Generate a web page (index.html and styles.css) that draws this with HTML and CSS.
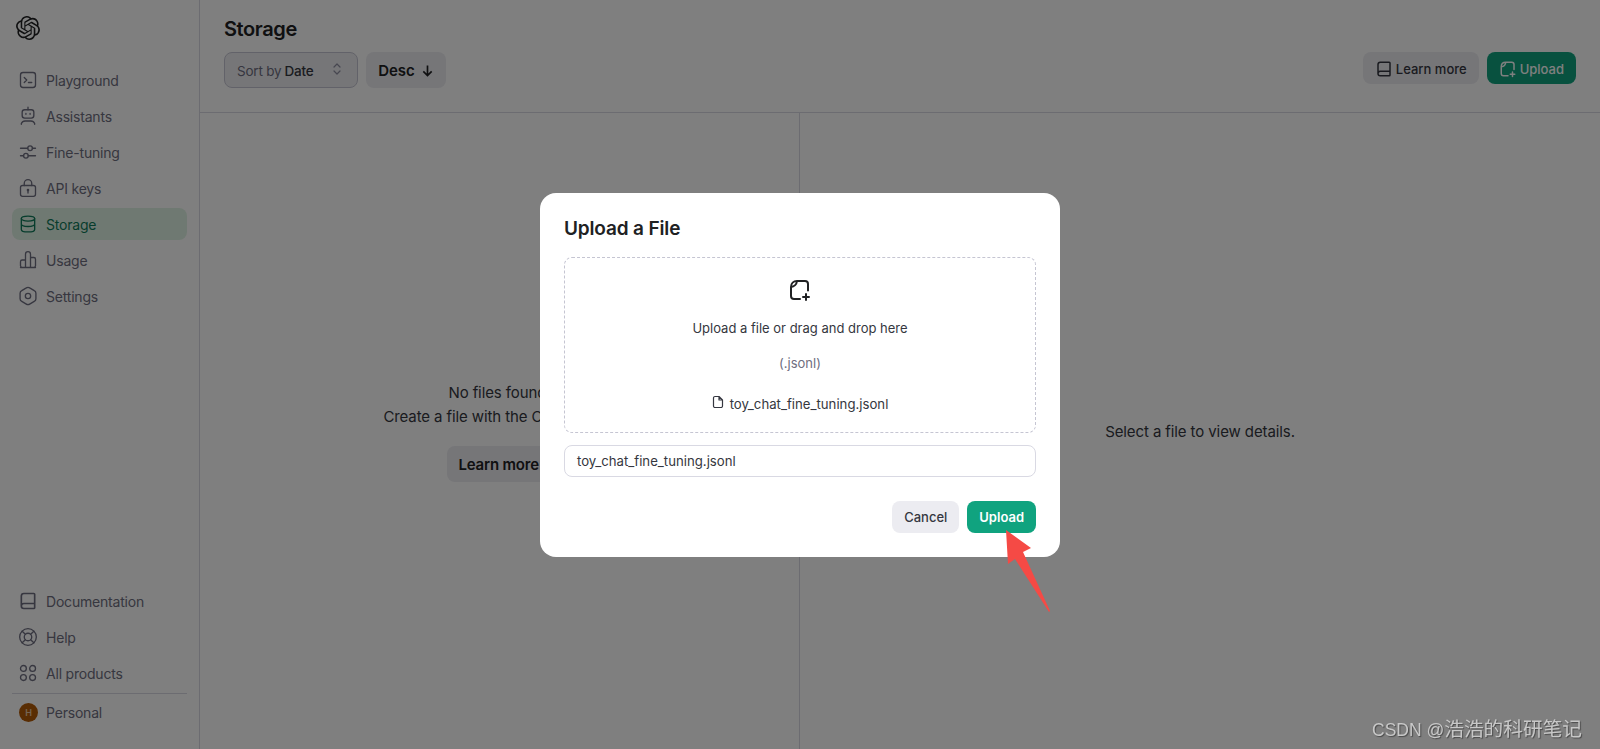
FILE: index.html
```html
<!DOCTYPE html>
<html lang="en">
<head>
<meta charset="utf-8">
<title>Storage</title>
<link rel="stylesheet" href="styles.css">
</head>
<body>
<svg class="defs" width="0" height="0" aria-hidden="true">
  <symbol id="i-book" viewBox="0 0 24 24"><path d="M7 3h12a1 1 0 0 1 1 1v16a1 1 0 0 1-1 1H7a3 3 0 0 1-3-3V6a3 3 0 0 1 3-3Z M4 18a3 3 0 0 1 3-3h13" fill="none" stroke="currentColor" stroke-width="2" stroke-linejoin="round"/></symbol>
  <symbol id="i-add" viewBox="0 0 24 24"><path d="M9 3h8a3 3 0 0 1 3 3v6.500 M12 21H6a3 3 0 0 1-3-3V9 M3 9c0-3.500 2.500-6 6-6-.3 3.200-2.800 5.700-6 6Z M18 16v6 M15 19h6" fill="none" stroke="currentColor" stroke-width="2" stroke-linecap="round" stroke-linejoin="round"/></symbol>
</svg>
<div class="app">
  <aside class="sidebar">
    <svg class="logo" viewBox="0 0 24 24" width="24" height="24"><path fill="currentColor" d="M22.2819 9.8211a5.9847 5.9847 0 0 0-.5157-4.9108 6.0462 6.0462 0 0 0-6.5098-2.9A6.0651 6.0651 0 0 0 4.9807 4.1818a5.9847 5.9847 0 0 0-3.9977 2.9 6.0462 6.0462 0 0 0 .7427 7.0966 5.98 5.98 0 0 0 .511 4.9107 6.051 6.051 0 0 0 6.5146 2.9001A5.9847 5.9847 0 0 0 13.2599 24a6.0557 6.0557 0 0 0 5.7718-4.2058 5.9894 5.9894 0 0 0 3.9977-2.9001 6.0557 6.0557 0 0 0-.7475-7.0729zm-9.022 12.6081a4.4755 4.4755 0 0 1-2.8764-1.0408l.1419-.0804 4.7783-2.7582a.7948.7948 0 0 0 .3927-.6813v-6.7369l2.02 1.1686a.071.071 0 0 1 .038.052v5.5826a4.504 4.504 0 0 1-4.4945 4.4944zm-9.6607-4.1254a4.4708 4.4708 0 0 1-.5346-3.0137l.142.0852 4.783 2.7582a.7712.7712 0 0 0 .7806 0l5.8428-3.3685v2.3324a.0804.0804 0 0 1-.0332.0615L9.74 19.9502a4.4992 4.4992 0 0 1-6.1408-1.6464zM2.3408 7.8956a4.485 4.485 0 0 1 2.3655-1.9728V11.6a.7664.7664 0 0 0 .3879.6765l5.8144 3.3543-2.0201 1.1685a.0757.0757 0 0 1-.071 0l-4.8303-2.7865A4.504 4.504 0 0 1 2.3408 7.872zm16.5963 3.8558L13.1038 8.364 15.1192 7.2a.0757.0757 0 0 1 .071 0l4.8303 2.7913a4.4944 4.4944 0 0 1-.6765 8.1042v-5.6772a.79.79 0 0 0-.407-.667zm2.0107-3.0231l-.142-.0852-4.7735-2.7818a.7759.7759 0 0 0-.7854 0L9.409 9.2297V6.8974a.0662.0662 0 0 1 .0284-.0615l4.8303-2.7866a4.4992 4.4992 0 0 1 6.6802 4.66zM8.3065 12.863l-2.02-1.1638a.0804.0804 0 0 1-.038-.0567V6.0742a4.4992 4.4992 0 0 1 7.3757-3.4537l-.142.0805L8.704 5.459a.7948.7948 0 0 0-.3927.6813zm1.0976-2.3654l2.602-1.4998 2.6069 1.4998v2.9994l-2.5974 1.4997-2.6067-1.4997Z"/></svg>
    <nav class="nav nav-main">
      <a class="nav-item"><svg class="nav-icon" viewBox="0 0 24 24"><rect x="3" y="3" width="18" height="18" rx="3"/><path d="m7.500 9 3 3-3 3M12.500 15h4"/></svg>Playground</a>
      <a class="nav-item"><svg class="nav-icon" viewBox="0 0 24 24"><rect x="5" y="4.500" width="14" height="10" rx="3"/><path d="M12 1.500v3M9.500 9v1M14.500 9v1M4 22v-1a5 5 0 0 1 5-3h6a5 5 0 0 1 5 3v1"/></svg>Assistants</a>
      <a class="nav-item"><svg class="nav-icon" viewBox="0 0 24 24"><circle cx="14.500" cy="7.500" r="2.800"/><circle cx="9.500" cy="16.500" r="2.800"/><path d="M3 7.500h8.700M17.300 7.500H21M3 16.500h3.700M12.300 16.500H21"/></svg>Fine-tuning</a>
      <a class="nav-item"><svg class="nav-icon" viewBox="0 0 24 24"><rect x="3" y="9" width="18" height="13" rx="2.500"/><path d="M7.500 9V6.500a4.500 4.500 0 0 1 9 0V9M12 15v3"/><circle cx="12" cy="14.500" r=".8"/></svg>API keys</a>
      <a class="nav-item is-active"><svg class="nav-icon" viewBox="0 0 24 24"><ellipse cx="12" cy="5.500" rx="8" ry="3"/><path d="M4 5.500v13c0 1.700 3.600 3 8 3s8-1.300 8-3v-13M4 12c0 1.700 3.600 3 8 3s8-1.300 8-3"/></svg>Storage</a>
      <a class="nav-item"><svg class="nav-icon" viewBox="0 0 24 24"><path d="M9 21V5a3 3 0 0 1 6 0v16M9 21H5a2 2 0 0 1-2-2v-5a2 2 0 0 1 2-2h4M15 21h4a2 2 0 0 0 2-2v-8a2 2 0 0 0-2-2h-4M3 21h18"/></svg>Usage</a>
      <a class="nav-item"><svg class="nav-icon" viewBox="0 0 24 24"><path d="M10 2.300a3.500 3.500 0 0 1 4 0l5.500 3.200a3.500 3.500 0 0 1 2 3.400v6.200a3.500 3.500 0 0 1-2 3.400L14 21.700a3.500 3.500 0 0 1-4 0l-5.500-3.200a3.500 3.500 0 0 1-2-3.400V8.900a3.500 3.500 0 0 1 2-3.400Z"/><circle cx="12" cy="12" r="3.200"/></svg>Settings</a>
    </nav>
    <nav class="nav nav-bottom">
      <a class="nav-item"><svg class="nav-icon"><use href="#i-book"/></svg>Documentation</a>
      <a class="nav-item"><svg class="nav-icon" viewBox="0 0 24 24"><circle cx="12" cy="12" r="10"/><circle cx="12" cy="12" r="4.500"/><path d="m5 5 3.800 3.800M19 5l-3.800 3.800M5 19l3.800-3.800M19 19l-3.800-3.800"/></svg>Help</a>
      <a class="nav-item"><svg class="nav-icon" viewBox="0 0 24 24"><circle cx="6.500" cy="6.500" r="3.500"/><circle cx="17.500" cy="6.500" r="3.500"/><circle cx="6.500" cy="17.500" r="3.500"/><circle cx="17.500" cy="17.500" r="3.500"/></svg>All products</a>
      <div class="nav-sep"></div>
      <a class="nav-item nav-org"><span class="avatar">H</span>Personal</a>
    </nav>
  </aside>
  <main class="main">
    <header class="header">
      <div class="header-left">
        <h1 class="page-title">Storage</h1>
        <div class="controls">
          <div class="select"><span class="select-label">Sort by</span><span class="select-value">Date</span>
            <svg class="chevrons" viewBox="0 0 8 12"><path d="M1 4 4 1l3 3M1 8l3 3 3-3"/></svg></div>
          <button class="btn btn-tall btn-desc">Desc <svg class="arrow-down" viewBox="0 0 14 14"><path d="M7 1.500v11M2.500 8 7 12.500 11.500 8"/></svg></button>
        </div>
      </div>
      <div class="header-right">
        <button class="btn btn-small"><svg class="btn-icon"><use href="#i-book"/></svg>Learn more</button>
        <button class="btn btn-small btn-green"><svg class="btn-icon"><use href="#i-add"/></svg>Upload</button>
      </div>
    </header>
    <section class="panels">
      <div class="panel panel-left">
        <p class="empty-text">No files found.<br>Create a file with the OpenAI API.</p>
        <button class="btn btn-tall btn-learn">Learn more</button>
      </div>
      <div class="panel"><p class="empty-text empty-detail">Select a file to view details.</p></div>
    </section>
  </main>
</div>
<div class="overlay">
  <div class="modal">
    <h2 class="modal-title">Upload a File</h2>
    <div class="dropzone">
      <svg class="drop-icon"><use href="#i-add"/></svg>
      <div class="drop-text">Upload a file or drag and drop here</div>
      <div class="drop-ext">(.jsonl)</div>
      <div class="drop-file"><svg class="file-icon" viewBox="0 0 12 14"><path d="M3 1.500h4L10.500 5v6A1.500 1.500 0 0 1 9 12.500H3A1.500 1.500 0 0 1 1.500 11V3A1.500 1.500 0 0 1 3 1.500ZM7 1.500 7 5h3.500"/></svg>toy_chat_fine_tuning.jsonl</div>
    </div>
    <div class="name-input">toy_chat_fine_tuning.jsonl</div>
    <div class="modal-actions">
      <button class="btn btn-small btn-cancel">Cancel</button>
      <button class="btn btn-small btn-green">Upload</button>
    </div>
  </div>
</div>
<svg class="red-arrow" viewBox="0 0 60 100" width="60" height="100"><polygon points="4,3 29,21 21,25 48,84 47,85 13,32 6,37"/></svg>
<div class="watermark"><span class="wm-latin">CSDN @</span>浩浩的科研笔记</div>
</body>
</html>
```
FILE: styles.css
```css
* { box-sizing: border-box; }
html, body { margin: 0; height: 100%; overflow: hidden; }
body {
  font-family: Inter, "Noto Sans", "Liberation Sans", sans-serif;
  font-size: 14px;
  color: #202123;
  background: #fff;
  position: relative;
}
.defs { position: absolute; }
.app { display: flex; height: 749px; }

.sidebar {
  width: 200px;
  flex: none;
  border-right: 1px solid #d9d9e3;
  padding: 16px 12px 21px;
  display: flex;
  flex-direction: column;
}
.logo { color: #202123; margin-left: 4px; display: block; flex: none; }
.nav { display: flex; flex-direction: column; gap: 4px; }
.nav-main { margin-top: 24px; }
.nav-bottom { margin-top: auto; }
.nav-item {
  display: flex;
  align-items: center;
  gap: 8px;
  height: 32px;
  padding: 0 6px;
  border-radius: 8px;
  color: #6e6e80;
  font-size: 14px;
  letter-spacing: -.2px;
}
.nav-item.is-active { background: #dff3e4; color: #0f7a5a; }
.nav-icon {
  width: 20px; height: 20px; flex: none;
  fill: none; stroke: currentColor; stroke-width: 1.600;
  stroke-linecap: round; stroke-linejoin: round;
}
.nav-sep { height: 1px; background: #d9d9e3; margin-bottom: -2px; }
.nav-org { gap: 8px; padding-left: 7px; }
.avatar {
  width: 19px; height: 19px; border-radius: 50%;
  background: #b35a06; color: #e8c9a8;
  font-size: 9px; font-weight: 600;
  display: flex; align-items: center; justify-content: center;
  flex: none;
}

.main { flex: 1; min-width: 0; display: flex; flex-direction: column; }
.header {
  height: 113px;
  flex: none;
  border-bottom: 1px solid #d9d9e3;
  padding: 16px 24px 0;
  display: flex;
  justify-content: space-between;
}
.page-title { margin: 0; font-size: 20px; font-weight: 600; line-height: 26px; color: #202123; letter-spacing: -.4px; }
.controls { display: flex; gap: 8px; margin-top: 10px; }
.select {
  width: 134px; height: 36px;
  display: flex; align-items: center;
  padding: 1px 12px 0;
  border: 1px solid #c5c5d2;
  border-radius: 8px;
  background: #ececf1;
  font-size: 13.500px;
  letter-spacing: -.2px;
}
.select-label { color: #6e6e80; margin-right: 3px; }
.select-value { color: #353740; font-weight: 500; }
.chevrons { width: 8px; height: 12px; margin-left: auto; margin-right: 4px; margin-top: -3px; fill: none; stroke: #8e8ea0; stroke-width: 1.200; stroke-linecap: round; stroke-linejoin: round; }

.btn {
  border: 0; margin: 0; font-family: inherit;
  display: inline-flex; align-items: center; justify-content: center;
  background: #ececf1; color: #353740;
  font-weight: 500; cursor: pointer;
  white-space: nowrap;
}
.btn-tall { height: 36px; border-radius: 8px; padding: 0 12px; font-size: 15px; font-weight: 600; color: #202123; }
.btn-small { height: 32px; border-radius: 8px; padding: 0 12px; font-size: 13px; }
.btn-desc { width: 80px; gap: 6px; }
.arrow-down { width: 13px; height: 13px; fill: none; stroke: currentColor; stroke-width: 1.800; }
.btn-green { background: #10a37f; color: #fff; font-weight: 600; }
.btn-icon { width: 18px; height: 18px; margin-right: 3px; }
.header-right { display: flex; gap: 8px; margin-top: 36px; }
.header-right .btn { padding: 1px 12px 0; }
.header-right .btn-green { font-weight: 500; }

.panels { flex: 1; display: grid; grid-template-columns: 3fr 4fr; min-height: 0; }
.panel {
  display: flex; flex-direction: column;
  align-items: center; justify-content: center;
}
.panel-left { border-right: 1px solid #d9d9e3; }
.empty-text { margin: 0; font-size: 15px; line-height: 24px; letter-spacing: -.1px; text-align: center; color: #353740; }
.empty-detail { padding-top: 2px; }
.btn-learn { margin-top: 17px; width: 106px; justify-content: flex-start; padding: 1px 12px 0; letter-spacing: -.2px; }

.overlay {
  position: absolute; inset: 0;
  background: rgba(0, 0, 0, .5);
  backdrop-filter: blur(.5px);
  display: flex; align-items: center; justify-content: center;
}
.modal {
  width: 520px; height: 364px;
  background: #fff;
  border-radius: 16px;
  padding: 24px;
  display: flex; flex-direction: column;
}
.modal-title { margin: 0; padding-top: 1px; font-size: 19px; line-height: 22px; font-weight: 600; color: #202123; letter-spacing: -.15px; }
.dropzone {
  margin-top: 17px;
  height: 176px;
  border: 1px dashed #c5c5d2;
  border-radius: 8px;
  display: flex; flex-direction: column; align-items: center;
  padding-top: 20px;
  color: #353740;
}
.drop-icon { width: 24px; height: 24px; color: #202123; display: block; }
.drop-text { margin-top: 16px; font-size: 13px; line-height: 20px; }
.drop-ext { margin-top: 15px; font-size: 13px; line-height: 20px; color: #6e6e80; }
.drop-file { margin-top: 21px; font-size: 13.200px; line-height: 20px; display: flex; align-items: center; gap: 6px; }
.file-icon { width: 12px; height: 14px; margin-top: -4px; fill: none; stroke: #353740; stroke-width: 1.200; stroke-linejoin: round; }
.name-input {
  margin-top: 12px; height: 32px;
  border: 1px solid #d9d9e3;
  border-radius: 8px;
  padding: 1px 12px 0;
  display: flex; align-items: center;
  font-size: 13.200px; color: #353740;
}
.modal-actions { margin-top: auto; display: flex; justify-content: flex-end; gap: 8px; }
.modal-actions .btn { font-size: 13px; padding-top: 1px; }

.red-arrow { position: absolute; left: 1002px; top: 527px; fill: #f54a45; }
.watermark {
  position: absolute; left: 1372px; top: 716px;
  font-family: "Liberation Sans", "Noto Sans CJK SC", sans-serif;
  font-size: 19.700px; line-height: 26px;
  color: #c8c8c8;
  text-shadow: 1px 1px 1px #4a4a4a;
  white-space: nowrap;
}
.wm-latin { font-size: 17.500px; }
```
